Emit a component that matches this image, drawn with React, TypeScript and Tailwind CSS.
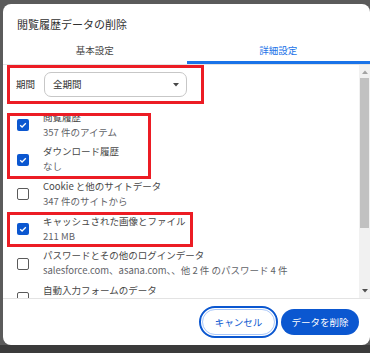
type Item = {
  title: string;
  sub: string;
  checked: boolean;
};

const items: Item[] = [
  { title: "閲覧履歴", sub: "357 件のアイテム", checked: true },
  { title: "ダウンロード履歴", sub: "なし", checked: true },
  { title: "Cookie と他のサイトデータ", sub: "347 件のサイトから", checked: false },
  { title: "キャッシュされた画像とファイル", sub: "211 MB", checked: true },
  {
    title: "パスワードとその他のログインデータ",
    sub: "salesforce.com、asana.com、、他 2 件 のパスワード 4 件",
    checked: false,
  },
  { title: "自動入力フォームのデータ", sub: "", checked: false },
];

function Checkbox({ checked }: { checked: boolean }) {
  if (checked) {
    return (
      <div className="w-[12px] h-[12px] rounded-[2px] bg-[#0b57d0] grid place-items-center">
        <svg width="10" height="10" viewBox="0 0 10 10">
          <path d="M2.2 5.2 L4.1 7 L7.8 3.2" fill="none" stroke="white" strokeWidth="1.3" />
        </svg>
      </div>
    );
  }
  return <div className="w-[12px] h-[12px] rounded-[2px] border-[1.5px] border-[#5a5a5a]" />;
}

export default function App() {
  return (
    <div className="w-[370px] h-[353px] overflow-hidden bg-[#5b5b5b] flex flex-col font-['Noto_Sans_CJK_JP','Noto_Sans',sans-serif]">
      <div className="pl-[3px] pt-[4px]">
        <div className="relative w-[367px] h-[341px] bg-white rounded-[8px] flex flex-col overflow-hidden">
          <div className="h-[36px] shrink-0 pt-[12px] pl-[14px] text-[11px] leading-[16px] text-[#303030]">
            閲覧履歴データの削除
          </div>

          <div className="h-[25px] shrink-0 flex border-b border-[#e3e3e3] text-[9.5px] leading-[14px]">
            <div className="flex-1 h-[24px] pt-[3px] text-center text-[#474747]">基本設定</div>
            <div className="flex-1 h-[24px] pt-[3px] text-center text-[#1a73e8] border-b-[3px] border-[#1a73e8]">
              詳細設定
            </div>
          </div>

          <div className="h-[233px] shrink-0 flex overflow-hidden">
            <div className="flex-1 flex flex-col">
              <div className="h-[32px] shrink-0 pt-[7px] flex items-center pl-[13px] text-[9.5px]">
                <span className="w-[28px] text-[#303030]">期間</span>
                <div className="w-[143px] h-[25px] rounded-[7px] border border-[#c7c7c7] flex items-center justify-between pl-[8px] pr-[7px] text-[#303030]">
                  <span>全期間</span>
                  <svg width="6" height="4" viewBox="0 0 6 4">
                    <path d="M0 0 H6 L3 3.5 Z" fill="#474747" />
                  </svg>
                </div>
              </div>

              <div className="mt-[11px] shrink-0 flex flex-col">
                {items.map((item) => (
                  <div key={item.title} className="h-[34.6px] flex items-center shrink-0">
                    <div className="w-[40px] pl-[14px] shrink-0">
                      <Checkbox checked={item.checked} />
                    </div>
                    <div className="flex flex-col pt-[2px] pb-[3px] text-[9.5px] leading-[15px] whitespace-nowrap">
                      <span className="text-[#474747]">{item.title}</span>
                      <span className="text-[#5f6368] min-h-[15px]">{item.sub}</span>
                    </div>
                  </div>
                ))}
              </div>
            </div>

            <div className="w-[11px] h-full bg-[#f1f1f1] flex flex-col items-center">
              <div className="h-[13px] grid place-items-center">
                <svg width="6" height="4" viewBox="0 0 6 4">
                  <path d="M0 4 H6 L3 0.5 Z" fill="#a3a3a3" />
                </svg>
              </div>
              <div className="w-[9px] h-[150px] bg-[#c1c1c1]" />
              <div className="flex-1" />
              <div className="h-[14px] grid place-items-center">
                <svg width="6" height="4" viewBox="0 0 6 4">
                  <path d="M0 0 H6 L3 3.5 Z" fill="#505050" />
                </svg>
              </div>
            </div>
          </div>

          <div className="flex-1 border-t border-[#e3e3e3] flex justify-end items-start pt-[10px] pr-[11px] gap-[6px] text-[9.5px]">
            <button className="w-[73px] h-[26px] rounded-full border border-[#a8c7fa] outline-2 outline-offset-1 outline-[#0b57d0] text-[#0b57d0]">
              キャンセル
            </button>
            <button className="w-[78px] h-[26px] rounded-full bg-[#0b57d0] text-white">データを削除</button>
          </div>

          <div className="absolute left-[4px] top-[61px] w-[197px] h-[39px] border-[3px] border-[#ec1c24]" />
          <div className="absolute left-[4px] top-[109px] w-[144px] h-[66px] border-[3px] border-[#ec1c24]" />
          <div className="absolute left-[4px] top-[208px] w-[186px] h-[35px] border-[3px] border-[#ec1c24]" />
        </div>
      </div>
      <div className="flex-1 bg-[#3b3b3b]" />
    </div>
  );
}
